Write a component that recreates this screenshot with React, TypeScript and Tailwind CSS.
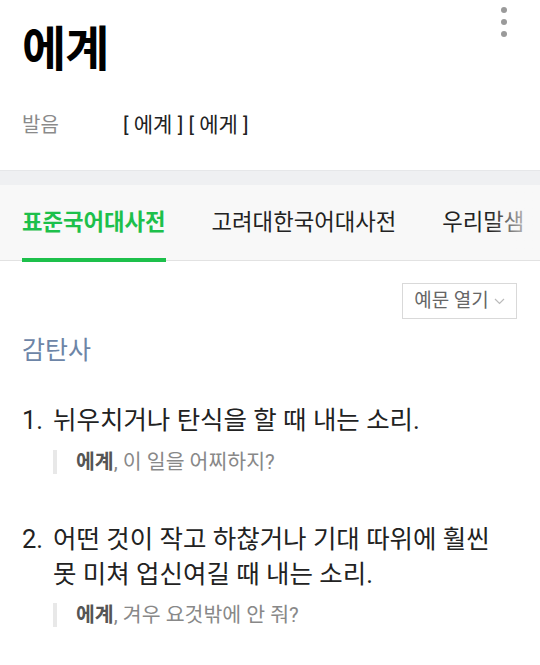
import React from "react";

const font = { fontFamily: 'Roboto, "Noto Sans CJK KR", sans-serif' };

export default function App() {
  return (
    <div
      className="w-[540px] h-[665px] bg-white overflow-hidden relative text-[#222]"
      style={font}
    >
      {/* header */}
      <div className="relative px-[22px] pt-[14px]">
        <h1 className="text-[48px] leading-[72px] font-bold text-black tracking-[-1px]">에계</h1>
        <div className="absolute right-[33px] top-[7px] flex flex-col gap-[6px]">
          <span className="block w-[6px] h-[6px] rounded-full bg-[#9a9a9a]" />
          <span className="block w-[6px] h-[6px] rounded-full bg-[#9a9a9a]" />
          <span className="block w-[6px] h-[6px] rounded-full bg-[#9a9a9a]" />
        </div>
        <div className="flex items-center mt-[25px] text-[20px] leading-[28px]">
          <span className="w-[101px] text-[#8a8a8a]">발음</span>
          <span className="text-[#222] text-[21px]">[ 에계 ] [ 에게 ]</span>
        </div>
      </div>

      {/* gray band */}
      <div className="mt-[31px] h-[15px] bg-[#eff0f2] border-t border-[#e6e7e9]" />

      {/* tabs */}
      <div className="relative h-[76px] bg-[#f8f8f8] border-b border-[#e2e2e2] flex items-stretch px-[22px] gap-[46px] text-[22.3px] whitespace-nowrap">
        <div className="relative flex items-center font-bold text-[#1dc04b]">
          표준국어대사전
          <span className="absolute left-0 right-0 bottom-[-2px] h-[4px] bg-[#1dc04b]" />
        </div>
        <div className="flex items-center text-[#222]">고려대한국어대사전</div>
        <div className="flex items-center text-[#222]">우리말샘</div>
        <div className="absolute right-0 top-0 bottom-0 w-[50px] bg-gradient-to-r from-[#f8f8f8]/0 to-[#f8f8f8]" />
      </div>

      {/* button */}
      <div className="flex justify-end px-[23px] pt-[22px]">
        <div className="h-[36px] w-[115px] border border-[#d9d9d9] flex items-center justify-center gap-[5px] text-[19px] text-[#666]">
          <span>예문 열기</span>
          <svg width="11" height="7" viewBox="0 0 11 7" fill="none">
            <path d="M1 1l4.5 4.5L10 1" stroke="#bbb" strokeWidth="1.2" />
          </svg>
        </div>
      </div>

      {/* part of speech */}
      <div className="px-[22px] pt-[14px] text-[25px] leading-[36px] text-[#6d85a7]">감탄사</div>

      {/* definitions */}
      <ol className="pl-[22px] pr-[30px] mt-[34px]">
        <li className="flex text-[25.5px] leading-[35px] text-[#222]">
          <span className="w-[31px] shrink-0">1.</span>
          <div>
            <p>뉘우치거나 탄식을 할 때 내는 소리.</p>
            <p className="mt-[12px] border-l-[4px] border-[#e8e8e8] pl-[19px] text-[20.5px] leading-[24px] text-[#888]">
              <b className="text-[#555] font-bold">에계</b>, 이 일을 어찌하지?
            </p>
          </div>
        </li>
        <li className="flex text-[25.5px] leading-[35px] text-[#222] mt-[48px]">
          <span className="w-[31px] shrink-0">2.</span>
          <div>
            <p>어떤 것이 작고 하찮거나 기대 따위에 훨씬 못 미쳐 업신여길 때 내는 소리.</p>
            <p className="mt-[11px] border-l-[4px] border-[#e8e8e8] pl-[19px] text-[20.5px] leading-[24px] text-[#888]">
              <b className="text-[#555] font-bold">에계</b>, 겨우 요것밖에 안 줘?
            </p>
          </div>
        </li>
      </ol>
    </div>
  );
}
